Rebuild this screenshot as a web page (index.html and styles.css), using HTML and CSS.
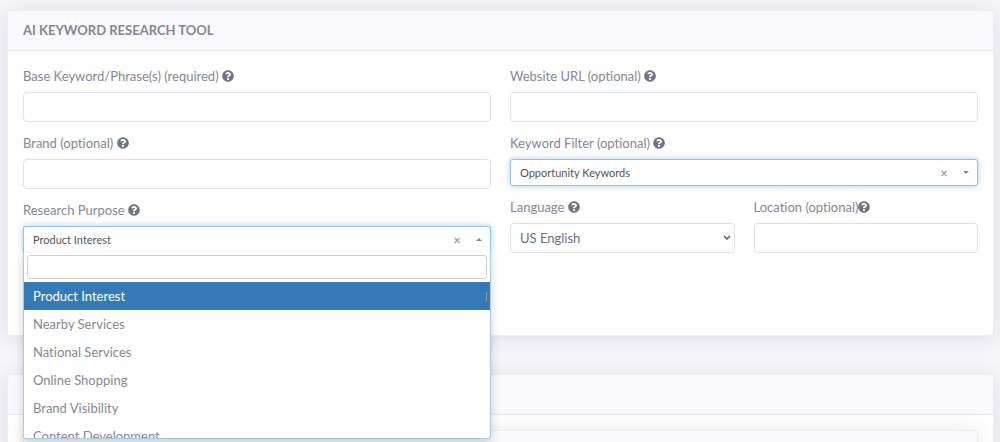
FILE: index.html
```html
<!DOCTYPE html>
<html lang="en">
<head>
<meta charset="utf-8">
<title>AI Keyword Research Tool</title>
<link rel="stylesheet" href="styles.css">
</head>
<body>
<svg class="defs" aria-hidden="true">
  <symbol id="help" viewBox="0 0 512 512"><path d="M504 256c0 137-111 248-248 248S8 393 8 256 119 8 256 8s248 111 248 248zM262.700 90c-54.500 0-89.300 23-116.500 63.800-3.500 5.300-2.400 12.400 2.700 16.300l34.700 26.300c5.200 3.900 12.600 3 16.700-2.100 17.900-22.700 30.100-35.800 57.300-35.800 20.400 0 45.700 13.100 45.700 33 0 15-12.400 22.700-32.500 34C247.100 238.500 216 254.900 216 296v4c0 6.600 5.400 12 12 12h56c6.600 0 12-5.400 12-12v-1.300c0-28.500 83.200-29.600 83.200-106.700 0-58-60.200-102-116.500-102zM256 338c-25.400 0-46 20.600-46 46s20.600 46 46 46 46-20.600 46-46-20.600-46-46-46z"/></symbol>
</svg>
<main class="page">
  <section class="card">
    <h1 class="card-header">AI KEYWORD RESEARCH TOOL</h1>
    <form class="card-body form">
      <div class="column">
        <div class="field">
          <label class="label" for="base">Base Keyword/Phrase(s) (required) <svg class="help"><use href="#help"/></svg></label>
          <input class="control" id="base" type="text">
        </div>
        <div class="field">
          <label class="label" for="brand">Brand (optional) <svg class="help"><use href="#help"/></svg></label>
          <input class="control" id="brand" type="text">
        </div>
        <div class="field">
          <label class="label" for="purpose">Research Purpose <svg class="help"><use href="#help"/></svg></label>
          <div class="picker picker-open">
            <select class="picker-select" id="purpose"><option>Product Interest</option></select>
            <button class="clear" type="button" aria-label="Clear research purpose">×</button>
            <span class="arrow arrow-up"></span>
            <div class="menu">
              <div class="menu-search"><input class="search" type="search" aria-label="Search purposes"></div>
              <ul class="options" role="listbox" aria-label="Research Purpose">
                <li class="option option-active" role="option" aria-selected="true">Product Interest<span class="thumb"></span></li>
                <li class="option" role="option">Nearby Services</li>
                <li class="option" role="option">National Services</li>
                <li class="option" role="option">Online Shopping</li>
                <li class="option" role="option">Brand Visibility</li>
                <li class="option" role="option">Content Development</li>
              </ul>
            </div>
          </div>
        </div>
      </div>
      <div class="column">
        <div class="field">
          <label class="label" for="url">Website URL (optional) <svg class="help"><use href="#help"/></svg></label>
          <input class="control" id="url" type="text">
        </div>
        <div class="field">
          <label class="label" for="filter">Keyword Filter (optional) <svg class="help"><use href="#help"/></svg></label>
          <div class="picker">
            <select class="picker-select" id="filter"><option>Opportunity Keywords</option></select>
            <button class="clear" type="button" aria-label="Clear keyword filter">×</button>
            <span class="arrow"></span>
          </div>
        </div>
        <div class="pair">
          <div class="field">
            <label class="label" for="language">Language <svg class="help"><use href="#help"/></svg></label>
            <div class="select-wrap">
              <select class="control select" id="language"><option>US English</option></select>
              <svg class="chevron" viewBox="0 0 8 6"><path d="M1 1l3 3 3-3"/></svg>
            </div>
          </div>
          <div class="field">
            <label class="label" for="location">Location (optional)<svg class="help"><use href="#help"/></svg></label>
            <input class="control" id="location" type="text">
          </div>
        </div>
      </div>
    </form>
  </section>
  <section class="card">
    <div class="card-header"></div>
    <div class="card-body">
      <div class="card"><div class="card-header"></div></div>
    </div>
  </section>
</main>
</body>
</html>
```

FILE: styles.css
```css
* { box-sizing: border-box; }

body {
  margin: 0;
  height: 100vh;
  overflow: hidden;
  background: #f6f6fb;
  color: #858796;
  font: 13px/20px Lato, "Noto Sans", sans-serif;
  font-variant-ligatures: none;
}

.defs { display: none; }

.page {
  display: flex;
  flex-direction: column;
  gap: 38px;
  padding: 10px 6px 10px 7px;
}

.card {
  background: #fff;
  border: 1px solid #eeeef3;
  border-radius: 4px;
  box-shadow: 0 2px 22px rgba(58, 59, 69, 0.13);
}

.card-header {
  margin: 0;
  min-height: 40px;
  padding: 9px 15px 10px;
  background: #f8f8fd;
  border-bottom: 1px solid #e6e6ec;
  border-radius: 4px 4px 0 0;
  font-size: 13px;
  font-weight: 700;
}

.card-body { padding: 15px; }

.form {
  display: grid;
  grid-template-columns: 1fr 1fr;
  gap: 19px;
  padding-bottom: 82px;
}

.column {
  display: flex;
  flex-direction: column;
  gap: 11px;
}

.pair {
  display: grid;
  grid-template-columns: 1fr 1fr;
  gap: 19px;
}

.field {
  display: flex;
  flex-direction: column;
  gap: 6px;
  min-width: 0;
}

.label { display: block; height: 20px; white-space: nowrap; }

.help {
  width: 12px;
  height: 12px;
  vertical-align: -1px;
  fill: #737586;
}

.control {
  display: block;
  width: 100%;
  height: 30px;
  padding: 0 9px;
  background: #fff;
  border: 1px solid #dfe0e8;
  border-radius: 4px;
  color: #6e707e;
  font: inherit;
}

.select-wrap { position: relative; }

.select { appearance: none; }

.chevron {
  position: absolute;
  top: 12px;
  right: 4px;
  width: 8px;
  height: 6px;
  fill: none;
  stroke: #50515c;
  stroke-width: 1.5;
  pointer-events: none;
}

.picker { position: relative; }

.picker-select {
  appearance: none;
  display: block;
  width: 100%;
  height: 27px;
  padding: 0 9px;
  background: #fff;
  border: 1px solid #8fc3ea;
  border-radius: 3px;
  box-shadow: 0 0 6px rgba(102, 175, 233, 0.6);
  color: #555;
  font: inherit;
  font-size: 11px;
}

.picker-open .picker-select {
  border-bottom-color: transparent;
  border-radius: 3px 3px 0 0;
}

.clear {
  position: absolute;
  top: 4px;
  right: 28px;
  width: 12px;
  height: 20px;
  padding: 0;
  border: 0;
  background: none;
  color: #888;
  font: inherit;
}

.arrow {
  position: absolute;
  top: 12px;
  right: 9px;
  border: 3px solid transparent;
  border-top-color: #888;
  border-bottom: 0;
}

.arrow-up {
  border-top: 0;
  border-bottom: 3px solid #888;
}

.menu {
  position: absolute;
  z-index: 2;
  top: 100%;
  left: 0;
  right: 0;
  background: #fff;
  border: 1px solid #a6cdea;
  border-top: 0;
  border-radius: 0 0 3px 3px;
  box-shadow: 0 4px 10px rgba(0, 0, 0, 0.18);
}

.menu-search { padding: 2px 3px 3px; }

.search {
  appearance: none;
  display: block;
  width: 100%;
  height: 24px;
  padding: 0 4px;
  border: 1px solid #d0d0d0;
  border-radius: 3px;
  font: inherit;
}

.options {
  height: 156px;
  margin: 0;
  padding: 0;
  overflow: hidden;
  list-style: none;
}

.option {
  position: relative;
  padding: 4px 9px;
}

.option-active { background: #337ab7; color: #fff; }

.thumb {
  position: absolute;
  top: 10px;
  right: 3px;
  width: 1px;
  height: 9px;
  background: #a98f80;
}
```
